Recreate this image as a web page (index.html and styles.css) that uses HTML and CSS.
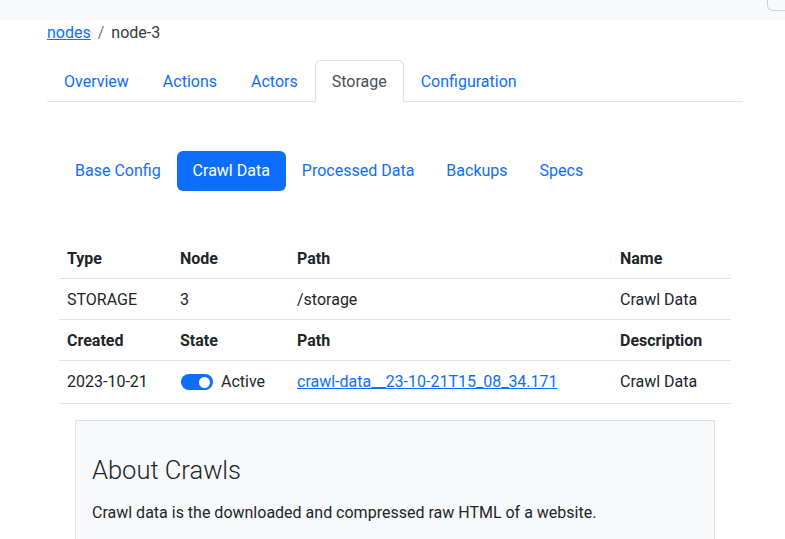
FILE: index.html
```html
<!DOCTYPE html>
<html lang="en">
<head>
<meta charset="utf-8">
<title>node-3 · Storage</title>
<link rel="stylesheet" href="styles.css">
</head>
<body>
<header class="topbar">
  <button class="topbar-btn" type="button" aria-label="menu"></button>
</header>
<main class="container">
  <nav class="breadcrumb">
    <a href="#" class="crumb-link">nodes</a>
    <span class="crumb-sep">/</span>
    <span class="crumb-current">node-3</span>
  </nav>
  <ul class="tabs">
    <li><a href="#" class="tab">Overview</a></li>
    <li><a href="#" class="tab">Actions</a></li>
    <li><a href="#" class="tab">Actors</a></li>
    <li><a href="#" class="tab tab-active">Storage</a></li>
    <li><a href="#" class="tab">Configuration</a></li>
  </ul>
  <section class="storage">
    <ul class="pills">
      <li><a href="#" class="pill">Base Config</a></li>
      <li><a href="#" class="pill pill-active">Crawl Data</a></li>
      <li><a href="#" class="pill">Processed Data</a></li>
      <li><a href="#" class="pill">Backups</a></li>
      <li><a href="#" class="pill">Specs</a></li>
    </ul>
    <table class="info-table">
      <colgroup>
        <col class="c1"><col class="c2"><col class="c3"><col class="c4">
      </colgroup>
      <tr class="head"><th>Type</th><th>Node</th><th>Path</th><th>Name</th></tr>
      <tr><td>STORAGE</td><td>3</td><td>/storage</td><td>Crawl Data</td></tr>
      <tr class="head"><th>Created</th><th>State</th><th>Path</th><th>Description</th></tr>
      <tr>
        <td>2023-10-21</td>
        <td>
          <label class="switch-row">
            <span class="switch"><span class="knob"></span></span>
            <span>Active</span>
          </label>
        </td>
        <td><a href="#" class="file-link">crawl-data__23-10-21T15_08_34.171</a></td>
        <td>Crawl Data</td>
      </tr>
    </table>
    <div class="about">
      <h3 class="about-title">About Crawls</h3>
      <p class="about-text">Crawl data is the downloaded and compressed raw HTML of a website.</p>
    </div>
  </section>
</main>
</body>
</html>
```
FILE: styles.css
```css
* { box-sizing: border-box; }
html, body { overflow: hidden; }
body {
  margin: 0;
  font-family: "Roboto", "Liberation Sans", sans-serif;
  font-size: 16px;
  line-height: 24px;
  color: #212529;
  background: #fff;
}
a { color: #0d6efd; }

.topbar {
  height: 20px;
  background: #f8f9fa;
  display: flex;
  justify-content: flex-end;
  align-items: flex-start;
}
.topbar-btn {
  width: 18px;
  height: 11px;
  margin: 0;
  padding: 0;
  background: #f8f9fa;
  border: 1px solid #ced4da;
  border-top: none;
  border-right: none;
  border-bottom-left-radius: 6px;
}

.container {
  width: 696px;
  margin-left: 47px;
}

.breadcrumb {
  display: flex;
  height: 24px;
  margin-top: 1px;
  margin-bottom: 15px;
}
.crumb-link { color: #0d6efd; text-decoration: underline; }
.crumb-sep { color: #6c757d; padding: 0 7px 0 7px; }
.crumb-current { color: #343a40; }

.tabs {
  list-style: none;
  margin: 0;
  padding: 0;
  display: flex;
  border-bottom: 1px solid #dee2e6;
}
.tab {
  display: block;
  padding: 9px 16px 7px;
  border: 1px solid transparent;
  border-top-left-radius: 6px;
  border-top-right-radius: 6px;
  margin-bottom: -1px;
  text-decoration: none;
  color: #0d6efd;
}
.tab-active {
  color: #495057;
  background: #fff;
  border-color: #dee2e6 #dee2e6 #fff;
}

.storage {
  padding: 0 12px;
  margin-top: 49px;
}

.pills {
  list-style: none;
  margin: 0 0 47px;
  padding: 0;
  display: flex;
}
.pill {
  display: block;
  padding: 8px 16px;
  border-radius: 6px;
  text-decoration: none;
  color: #0d6efd;
}
.pill-active {
  background: #0d6efd;
  color: #fff;
}

.info-table {
  width: 100%;
  border-collapse: collapse;
  table-layout: fixed;
  margin-bottom: 16px;
}
.c1 { width: 113px; }
.c2 { width: 117px; }
.c3 { width: 323px; }
.c4 { width: 119px; }
.info-table th,
.info-table td {
  text-align: left;
  padding: 9px 8px 7px;
  border-bottom: 1px solid #dee2e6;
  vertical-align: top;
  white-space: nowrap;
}
.info-table th { font-weight: 700; }

.switch-row {
  display: flex;
  align-items: flex-start;
  gap: 8px;
  padding-left: 1px;
  margin-bottom: 2px;
}
.switch {
  width: 32px;
  height: 16px;
  margin-top: 4px;
  border-radius: 8px;
  background: #0d6efd;
  display: flex;
  justify-content: flex-end;
  align-items: center;
  padding-right: 3px;
}
.knob {
  width: 11px;
  height: 11px;
  border-radius: 50%;
  background: #fff;
}

.file-link { color: #0d6efd; text-decoration: underline; }

.about {
  margin: 0 16px;
  background: #f8f9fa;
  border: 1px solid #dee2e6;
  padding: 34px 16px 24px;
}
.about-title {
  margin: 0 0 15px;
  font-size: 25.5px;
  line-height: 30.6px;
  font-weight: 300;
  color: #212529;
}
.about-text { margin: 0; }
```
